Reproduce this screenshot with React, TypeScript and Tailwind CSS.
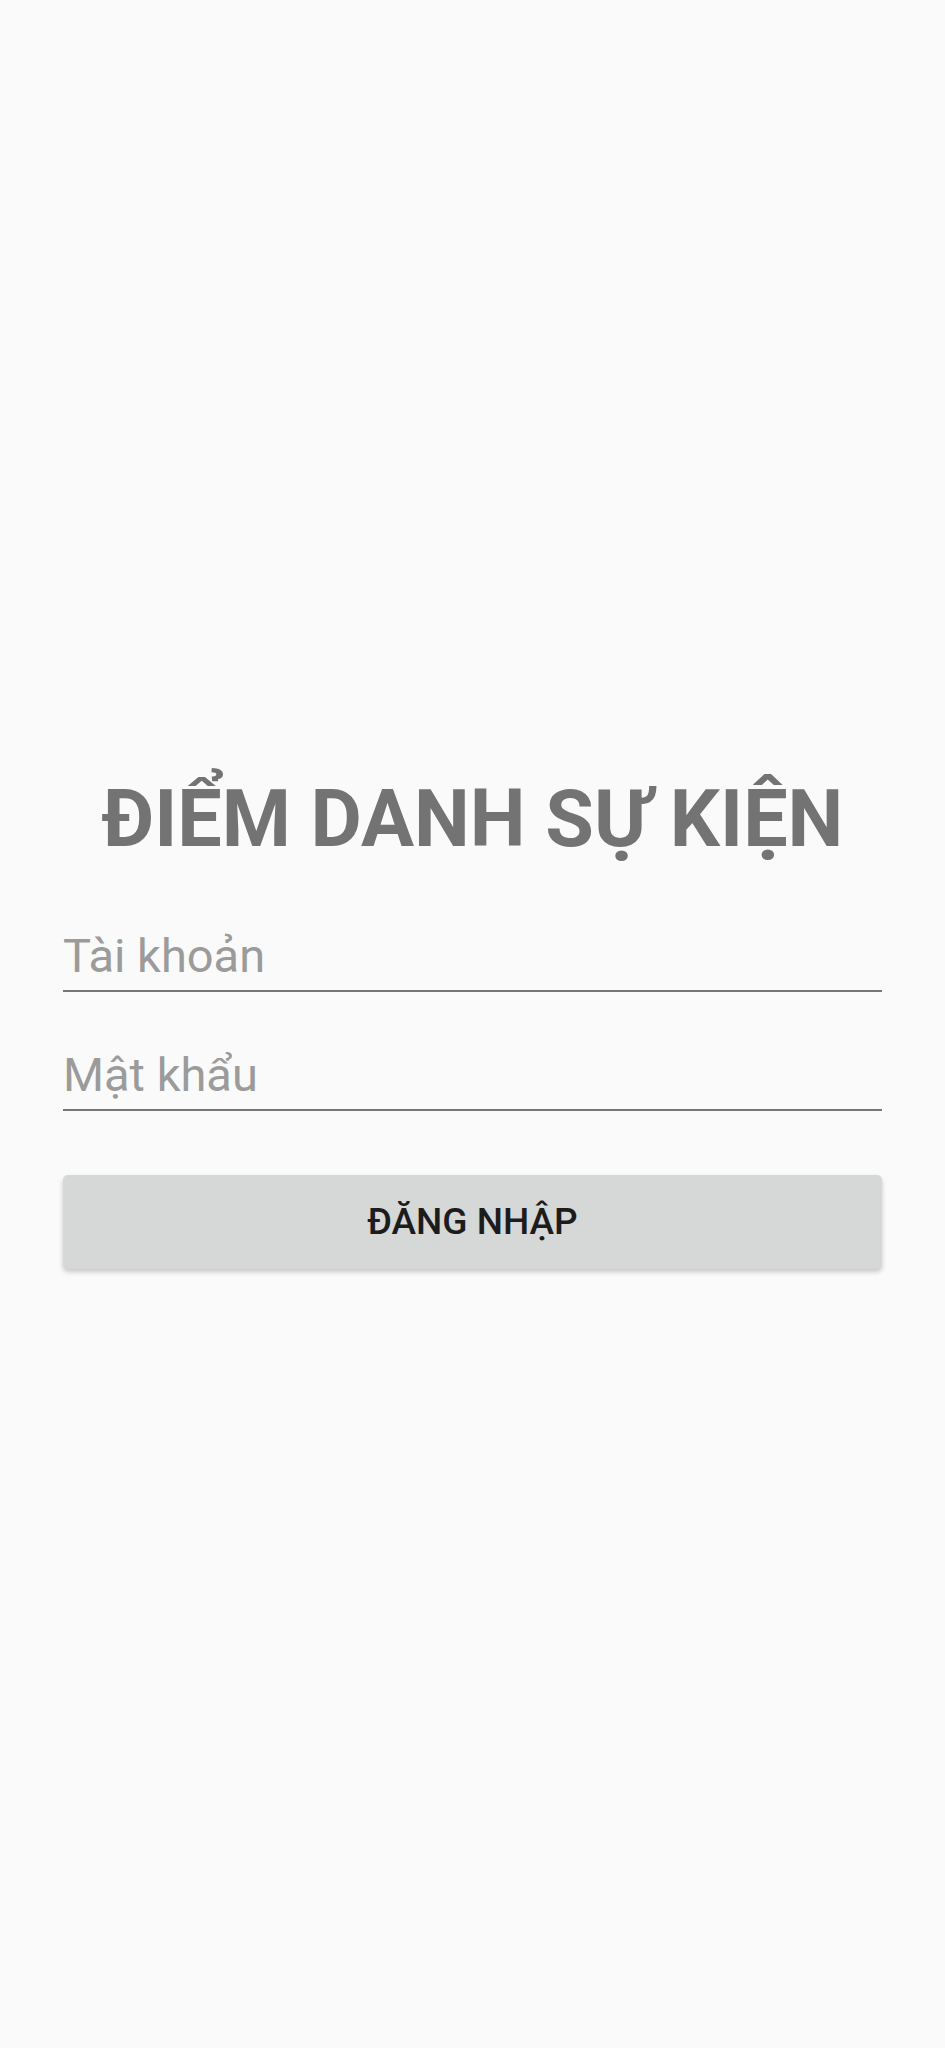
import React from "react";

function Field({ placeholder, type }: { placeholder: string; type?: string }) {
  return (
    <div className="border-b-[2px] border-[#767676] pb-[7px]">
      <input
        type={type || "text"}
        placeholder={placeholder}
        className="w-full h-[55px] bg-transparent outline-none p-0 text-[47px] leading-[55px] text-[#333] placeholder:text-[#9b9b9b]"
        style={{ fontFamily: "Roboto, 'Noto Sans', sans-serif" }}
      />
    </div>
  );
}

export default function App() {
  return (
    <div
      className="min-h-[2048px] w-full bg-[#fafafa] pt-[773px]"
      style={{ fontFamily: "Roboto, 'Noto Sans', sans-serif" }}
    >
      <h1 className="text-center text-[79px] leading-[92px] font-bold text-[#737373]">
        ĐIỂM DANH SỰ KIỆN
      </h1>
      <div className="mx-[63px] mt-[63px] flex flex-col gap-[55px]">
        <Field placeholder="Tài khoản" />
        <Field placeholder="Mật khẩu" type="password" />
      </div>
      <div className="mx-[63px] mt-[64px]">
        <button className="w-full h-[94px] rounded-[5px] bg-[#d6d7d7] text-[#1c1c1c] text-[37px] font-medium shadow-[0_3px_5px_rgba(0,0,0,0.2)]">
          ĐĂNG NHẬP
        </button>
      </div>
    </div>
  );
}
